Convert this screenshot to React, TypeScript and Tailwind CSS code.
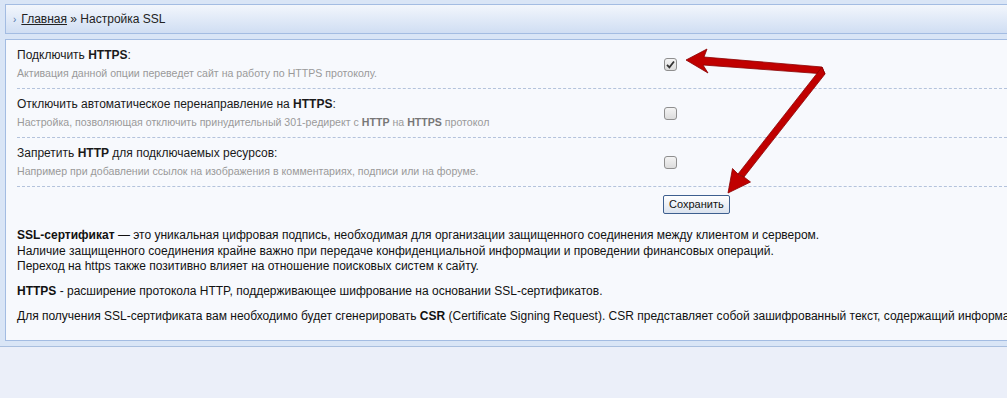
import React from "react";

const font = { fontFamily: '"Liberation Sans", Arial, sans-serif' };

function Row({ label, desc, checked }: { label: React.ReactNode; desc: React.ReactNode; checked?: boolean }) {
  return (
    <div className="flex border-b border-dashed border-[#b4c3dc] pt-[7px] pb-[7px]">
      <div className="w-[647px] shrink-0">
        <div className="text-[12px] leading-[16px] text-[#1a1a1a]">{label}</div>
        <div className="mt-[2px] text-[10.6px] leading-[16px] text-[#9a9a9a]">{desc}</div>
      </div>
      <div className="flex items-center">
        <div className="flex h-[13px] w-[13px] items-center justify-center rounded-[3px] border border-[#8f8f8f] bg-gradient-to-b from-[#f4f4f4] to-[#dcdcdc]">
          {checked && (
            <svg width="9" height="9" viewBox="0 0 9 9">
              <path d="M1 4.8 L3.4 7.3 L8 1.5" fill="none" stroke="#333" strokeWidth="1.8" />
            </svg>
          )}
        </div>
      </div>
    </div>
  );
}

export default function App() {
  return (
    <div className="relative h-[398px] w-[1007px] overflow-hidden bg-[#ebeff9]" style={font}>
      <div className="border-b border-[#a9bfdf] bg-[#d9e5f6] pl-[5px] pt-[4px] pb-[5px]">
        <div className="flex h-[30px] items-center border border-r-0 border-[#a3bce2] bg-gradient-to-b from-[#f2f6fc] to-[#d0def3] pl-[7px] text-[12px] text-[#222]">
          <span className="mr-[5px] text-[10px] text-[#5577aa]">›</span>
          <span className="underline">Главная</span>
          <span>&nbsp;» Настройка SSL</span>
        </div>
        <div className="mt-[5px] h-[302px] overflow-hidden border border-r-0 border-[#a3bce2] bg-[#f7f9fd] pl-[11px]">
          <Row
            checked
            label={<>Подключить <b>HTTPS</b>:</>}
            desc="Активация данной опции переведет сайт на работу по HTTPS протоколу."
          />
          <Row
            label={<>Отключить автоматическое перенаправление на <b>HTTPS</b>:</>}
            desc={<>Настройка, позволяющая отключить принудительный 301-редирект с <b className="text-[#777]">HTTP</b> на <b className="text-[#777]">HTTPS</b> протокол</>}
          />
          <Row
            label={<>Запретить <b>HTTP</b> для подключаемых ресурсов:</>}
            desc="Например при добавлении ссылок на изображения в комментариях, подписи или на форуме."
          />
          <div className="flex pt-[8px]">
            <div className="w-[646px] shrink-0" />
            <button className="h-[19px] rounded-[2px] border border-[#3d5f8f] bg-gradient-to-b from-[#ffffff] to-[#dbe3ee] px-[5px] text-[11px] leading-[15px] text-[#111]">
              Сохранить
            </button>
          </div>
          <div className="mt-[14px] whitespace-nowrap text-[12px] leading-[15.5px] text-[#111]">
            <p>
              <b>SSL-сертификат</b> — это уникальная цифровая подпись, необходимая для организации защищенного соединения между клиентом и сервером.
              <br />
              Наличие защищенного соединения крайне важно при передаче конфиденциальной информации и проведении финансовых операций.
              <br />
              Переход на https также позитивно влияет на отношение поисковых систем к сайту.
            </p>
            <p className="mt-[9px]">
              <b>HTTPS</b> - расширение протокола HTTP, поддерживающее шифрование на основании SSL-сертификатов.
            </p>
            <p className="mt-[10px]">
              Для получения SSL-сертификата вам необходимо будет сгенерировать <b>CSR</b> (Certificate Signing Request). CSR представляет собой зашифрованный текст, содержащий информацию
            </p>
          </div>
        </div>
      </div>

      <svg className="pointer-events-none absolute left-0 top-0" width="1007" height="398" viewBox="0 0 1007 398">
        <g fill="#c00000" stroke="#8a0000" strokeWidth="0.8" strokeLinejoin="round">
          <polygon points="686,60 707,49 704,57 822,67 825,74 703,65 708,73" />
          <polygon points="822,67 825,74 744,177 738,174" />
          <polygon points="728,193 732.5,168.5 739,175 744,177 750.5,182" />
        </g>
      </svg>
    </div>
  );
}
